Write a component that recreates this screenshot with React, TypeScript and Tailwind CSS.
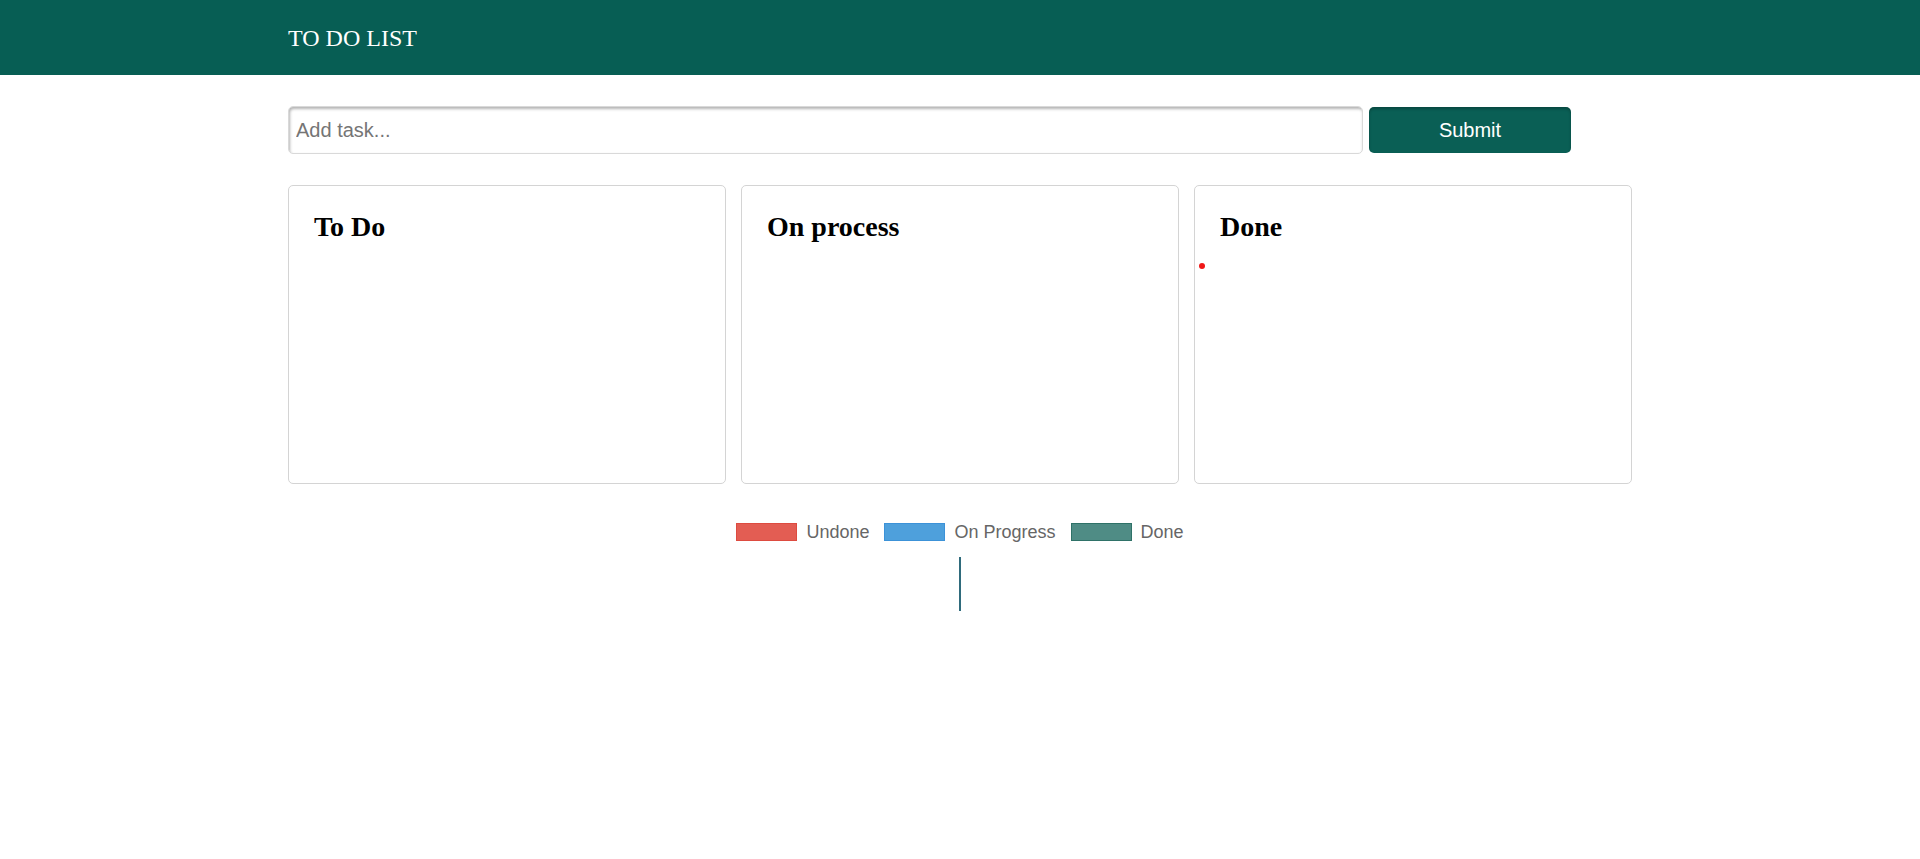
import * as React from "react"

// Legend entries under the board
const legend = [
  { label: "Undone", box: "bg-[#e35d53] border-[#dd4b40]" },
  { label: "On Progress", box: "bg-[#4ea0dc] border-[#3c92d8]" },
  { label: "Done", box: "bg-[#4f8c85] border-[#2f7268]" },
]

function Column({ title, children }: { title: string; children?: React.ReactNode }) {
  return (
    <div className="relative h-[299px] rounded-[5px] border border-[#d4d4d4] bg-white px-[25px] pt-[25px]">
      <h2 className="font-['Liberation_Serif',serif] text-[28px] font-bold leading-[32px] text-black">{title}</h2>
      {children}
    </div>
  )
}

export default function App() {
  const [task, setTask] = React.useState("")

  return (
    <div className="min-h-screen bg-white font-['Liberation_Sans',Arial,sans-serif]">
      {/* Header */}
      <header className="h-[75px] bg-[#075e54]">
        <div className="mx-auto flex h-full w-[1344px] items-center">
          <h1 className="font-['Liberation_Serif',serif] text-[24px] leading-none text-white">TO DO LIST</h1>
        </div>
      </header>

      <main className="mx-auto w-[1344px]">
        {/* Input row */}
        <div className="mt-[31px] flex items-center">
          <input
            value={task}
            onChange={(e) => setTask(e.target.value)}
            placeholder="Add task..."
            className="h-[48px] w-[1075px] rounded-[5px] border border-[#d9d9d9] bg-white pl-[7px] text-[20px] text-[#333] shadow-[inset_1px_2px_3px_rgba(0,0,0,0.3)] outline-none placeholder:text-[#757575]"
          />
          <button className="ml-[6px] h-[46px] w-[202px] rounded-[5px] bg-[#0a5f55] text-[20px] text-white shadow-[inset_0_2px_3px_rgba(0,0,0,0.25)]">
            Submit
          </button>
        </div>

        {/* Board */}
        <div className="mt-[31px] grid grid-cols-3 gap-[15px]">
          <Column title="To Do" />
          <Column title="On process" />
          <Column title="Done">
            <span className="absolute left-[4px] top-[77px] h-[6px] w-[6px] rounded-full bg-[#f01818]" />
          </Column>
        </div>

        {/* Chart legend */}
        <div className="mt-[38px] flex flex-col items-center">
          <div className="flex items-center gap-[15px]">
            {legend.map((item) => (
              <div key={item.label} className="flex items-center gap-[9px]">
                <span className={`h-[18px] w-[61px] border ${item.box}`} />
                <span className="text-[18px] leading-[20px] text-[#666]">{item.label}</span>
              </div>
            ))}
          </div>
          <div className="mt-[15px] h-[54px] w-[2px] bg-[#2f6b7c]" />
        </div>
      </main>
    </div>
  )
}
